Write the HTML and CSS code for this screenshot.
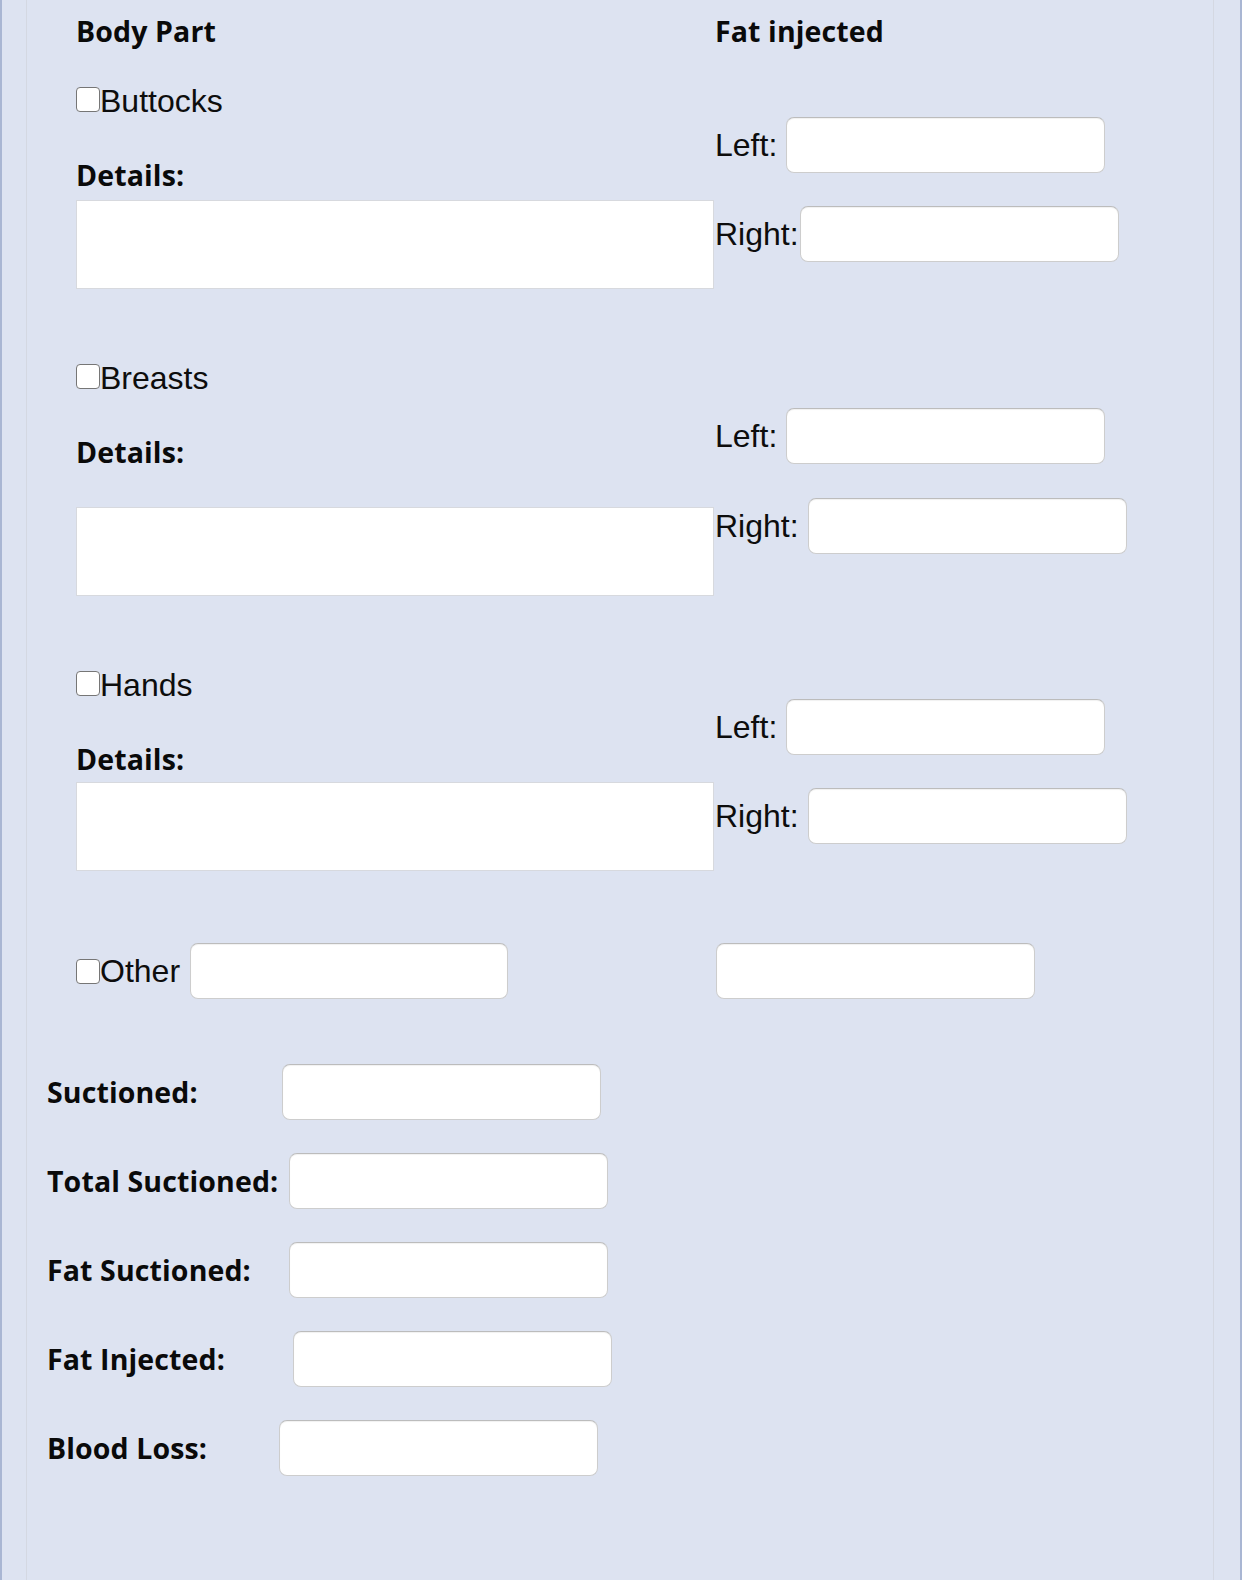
FILE: index.html
```html
<!DOCTYPE html>
<html lang="en">
<head>
<meta charset="utf-8">
<title>Fat Transfer</title>
<link rel="stylesheet" href="styles.css">
</head>
<body>
<div class="page">
  <div class="panel">
    <div class="parts">
      <div class="part-grid head">
        <div class="col-title">Body Part</div>
        <div class="col-title">Fat injected</div>
      </div>

      <div class="part-grid part">
        <div class="part-main">
          <label class="check-row"><input type="checkbox" class="check"><span>Buttocks</span></label>
          <div class="details-label">Details:</div>
          <textarea class="details"></textarea>
        </div>
        <div class="part-amounts">
          <label class="amount">Left: <input type="text" class="field"></label>
          <label class="amount amount--right">Right:<input type="text" class="field"></label>
        </div>
      </div>

      <div class="part-grid part part--loose">
        <div class="part-main">
          <label class="check-row"><input type="checkbox" class="check"><span>Breasts</span></label>
          <div class="details-label">Details:</div>
          <textarea class="details"></textarea>
        </div>
        <div class="part-amounts">
          <label class="amount">Left: <input type="text" class="field"></label>
          <label class="amount amount--right">Right: <input type="text" class="field"></label>
        </div>
      </div>

      <div class="part-grid part part--tight">
        <div class="part-main">
          <label class="check-row"><input type="checkbox" class="check"><span>Hands</span></label>
          <div class="details-label">Details:</div>
          <textarea class="details"></textarea>
        </div>
        <div class="part-amounts">
          <label class="amount">Left: <input type="text" class="field"></label>
          <label class="amount amount--right">Right: <input type="text" class="field"></label>
        </div>
      </div>

      <div class="part-grid other">
        <div class="other-main">
          <label class="check-row check-row--inline"><input type="checkbox" class="check"><span>Other</span></label>
          <input type="text" class="field other-field">
        </div>
        <div class="other-amount">
          <input type="text" class="field">
        </div>
      </div>
    </div>

    <div class="totals">
      <div class="stat stat--suctioned"><span class="stat-label">Suctioned:</span><input type="text" class="field"></div>
      <div class="stat stat--total"><span class="stat-label">Total Suctioned:</span><input type="text" class="field"></div>
      <div class="stat stat--fat-suctioned"><span class="stat-label">Fat Suctioned:</span><input type="text" class="field"></div>
      <div class="stat stat--fat-injected"><span class="stat-label">Fat Injected:</span><input type="text" class="field"></div>
      <div class="stat stat--blood"><span class="stat-label">Blood Loss:</span><input type="text" class="field"></div>
    </div>
  </div>
</div>
</body>
</html>
```
FILE: styles.css
```css
* {
  box-sizing: border-box;
}

html,
body {
  margin: 0;
  padding: 0;
  background: #dde3f1;
}

body {
  font-family: "Liberation Sans", Arial, sans-serif;
  font-size: 32px;
  color: #0d0d0d;
}

/* outer frame with the darker edges */
.page {
  min-height: 1580px;
  border-left: 2px solid #a9b6d3;
  border-right: 2px solid #a9b6d3;
  background: #dde3f1;
}

.panel {
  margin: 0 26px 0 24px;
  min-height: 1580px;
  border-left: 1px solid #d4d8e2;
  border-right: 1px solid #d4d8e2;
  padding: 0 0 0 20px;
}

.parts {
  padding-left: 29px;
}

.part-grid {
  display: grid;
  grid-template-columns: 639px 1fr;
}

/* column headings */
.head {
  padding-top: 14px;
}

.col-title,
.details-label,
.stat-label {
  font-family: "Open Sans", "Liberation Sans", sans-serif;
  font-weight: 700;
  font-size: 28.5px;
  line-height: 34px;
  letter-spacing: 0.12px;
  color: #0a0a0a;
}

/* one body part block */
.part {
  margin-top: 39px;
}

.part + .part {
  margin-top: 75px;
}

.part-main {
  display: flex;
  flex-direction: column;
  align-items: flex-start;
}

.check-row {
  display: flex;
  align-items: flex-start;
  height: 28px;
  line-height: 28px;
}

.check {
  appearance: none;
  -webkit-appearance: none;
  margin: 0;
  width: 24px;
  height: 25px;
  border: 1.5px solid #767676;
  border-radius: 4px;
  background: #fff;
  flex: none;
}

.details-label {
  margin-top: 43px;
}

.details {
  display: block;
  margin: 8px 0 0;
  width: 638px;
  height: 89px;
  border: 1px solid #d7d9de;
  border-radius: 0;
  background: #fff;
  resize: none;
  font: inherit;
}

.part-amounts {
  display: flex;
  flex-direction: column;
  align-items: flex-start;
  padding-top: 30px;
}

.amount {
  display: flex;
  align-items: center;
  white-space: pre;
  height: 56px;
}

.amount--right {
  margin-top: 33px;
}

.amount--right .field {
  margin-left: 1px;
}

.field {
  margin: 0;
  width: 319px;
  height: 56px;
  padding: 0 10px;
  border: 1px solid #cdcdcd;
  border-top-color: #bcbcbc;
  border-radius: 8px;
  background: #fff;
  box-shadow: inset 0 1px 1px rgba(0, 0, 0, 0.06);
  font: inherit;
}

/* second block sits a little lower on the right */
.part--loose .part-amounts {
  padding-top: 44px;
}

.part--loose .amount--right {
  margin-top: 34px;
}

.part--loose .details {
  margin-top: 38px;
}

.part--tight .part-amounts {
  padding-top: 28px;
}

.part--tight .details {
  margin-top: 6px;
}

/* free-text "Other" row */
.other {
  margin-top: 72px;
  height: 56px;
}

.other-main {
  display: flex;
  align-items: center;
}

.check-row--inline {
  align-items: center;
  height: auto;
  line-height: 34px;
}

.other-field {
  margin-left: 10px;
  width: 318px;
}

.other-amount {
  padding-left: 1px;
}

/* totals block */
.totals {
  margin-top: 65px;
}

.stat {
  display: flex;
  align-items: center;
  height: 56px;
}

.stat + .stat {
  margin-top: 33px;
}

.stat-label {
  flex: none;
}

.stat--suctioned .stat-label { width: 235px; }
.stat--total .stat-label { width: 242px; }
.stat--fat-suctioned .stat-label { width: 242px; }
.stat--fat-injected .stat-label { width: 246px; }
.stat--blood .stat-label { width: 232px; }

.stat--blood {
  margin-top: 34px;
}
```
